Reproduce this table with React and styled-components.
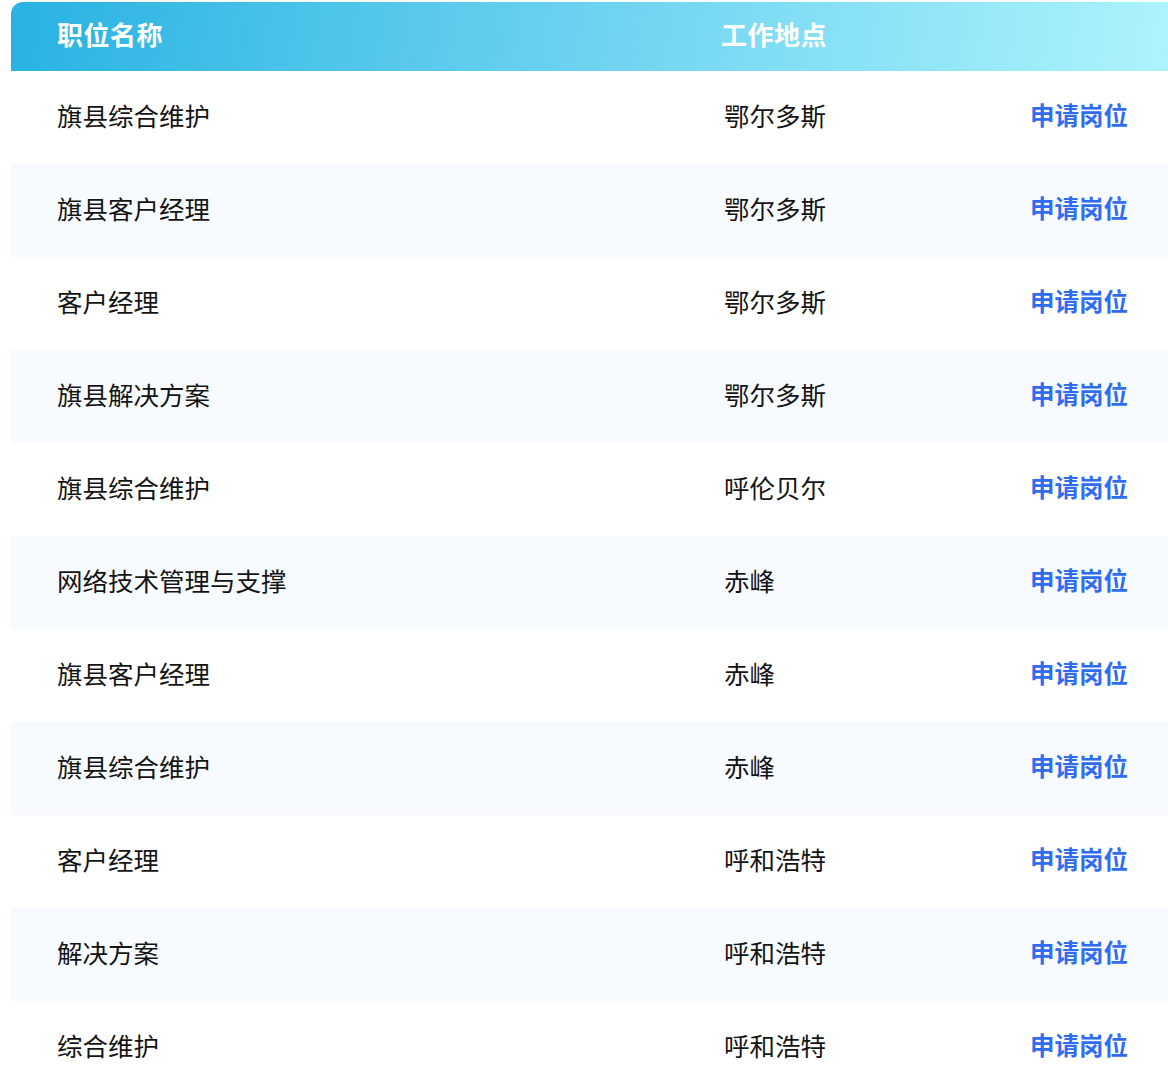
import React from 'react';
import styled, { createGlobalStyle } from 'styled-components';

const GlobalStyle = createGlobalStyle`
  html, body {
    margin: 0;
    padding: 0;
    background: #ffffff;
    overflow: hidden;
  }
  body {
    font-family: "Noto Sans CJK SC", "Noto Sans", sans-serif;
  }
`;

const Page = styled.div`
  padding: 2px 0 0 11px;
`;

const Table = styled.div`
  width: 1170px;
  display: flex;
  flex-direction: column;
`;

const HeaderRow = styled.div`
  display: grid;
  grid-template-columns: 664px 1fr;
  align-items: center;
  height: 69px;
  padding: 0 0 6px 46px;
  box-sizing: border-box;
  border-radius: 12px 12px 0 0;
  background: linear-gradient(100deg, #28b2e2 0%, #6dd3f0 50%, #aef4fd 100%);
`;

const HeaderCell = styled.div`
  color: #ffffff;
  font-size: 26px;
  font-weight: 700;
  letter-spacing: 0.5px;
`;

const Row = styled.div`
  display: grid;
  grid-template-columns: 667px 1fr auto;
  align-items: center;
  height: 93px;
  padding: 0 53px 0 46px;
  background: ${(p) => (p.$striped ? '#f7fbff' : '#ffffff')};
`;

const Cell = styled.div`
  color: #141414;
  font-size: 25.5px;
  margin-bottom: 6px;
`;

const ApplyLink = styled.a`
  color: #2f6cf2;
  font-size: 24.5px;
  font-weight: 700;
  text-decoration: none;
  cursor: pointer;
  margin-bottom: 6px;
`;

const jobs = [
  ['旗县综合维护', '鄂尔多斯'],
  ['旗县客户经理', '鄂尔多斯'],
  ['客户经理', '鄂尔多斯'],
  ['旗县解决方案', '鄂尔多斯'],
  ['旗县综合维护', '呼伦贝尔'],
  ['网络技术管理与支撑', '赤峰'],
  ['旗县客户经理', '赤峰'],
  ['旗县综合维护', '赤峰'],
  ['客户经理', '呼和浩特'],
  ['解决方案', '呼和浩特'],
  ['综合维护', '呼和浩特'],
];

export default function App() {
  return (
    <>
      <GlobalStyle />
      <Page>
        <Table>
          <HeaderRow>
            <HeaderCell>职位名称</HeaderCell>
            <HeaderCell>工作地点</HeaderCell>
          </HeaderRow>
          {jobs.map(([title, place], i) => (
            <Row key={i} $striped={i % 2 === 1}>
              <Cell>{title}</Cell>
              <Cell>{place}</Cell>
              <ApplyLink>申请岗位</ApplyLink>
            </Row>
          ))}
        </Table>
      </Page>
    </>
  );
}
